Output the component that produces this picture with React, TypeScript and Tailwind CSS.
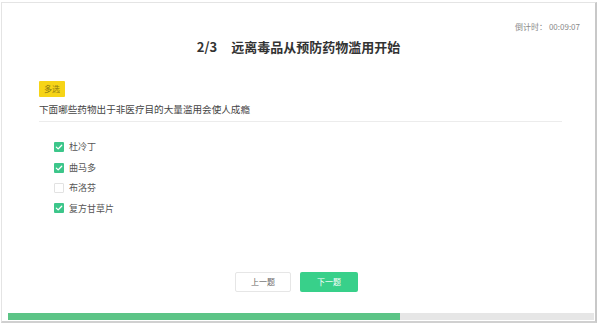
import React from "react";

const font = { fontFamily: '"Noto Sans CJK SC", "Noto Sans", sans-serif' };

function Check({ checked }: { checked: boolean }) {
  if (!checked) {
    return <div className="w-[10px] h-[10px] border border-[#e2e2e2] rounded-[1px] bg-white" />;
  }
  return (
    <div className="w-[10px] h-[10px] rounded-[1px] bg-[#3cc68a] flex items-center justify-center">
      <svg width="8" height="8" viewBox="0 0 8 8">
        <path d="M1.3 4.1 L3.2 5.9 L6.7 2.2" stroke="white" strokeWidth="1.3" fill="none" strokeLinecap="round" strokeLinejoin="round" />
      </svg>
    </div>
  );
}

export default function App() {
  const options = [
    { label: "杜冷丁", checked: true },
    { label: "曲马多", checked: true },
    { label: "布洛芬", checked: false },
    { label: "复方甘草片", checked: true },
  ];
  return (
    <div className="w-[600px] h-[328px] bg-white pt-[2px] pl-[1px]" style={font}>
      <div className="w-[596px] h-[321px] border border-[#e4e4e4] border-r-2 border-r-[#c8c8c8] border-b-2 border-b-[#d0d0d0] flex flex-col">
        <div className="pt-[18px] pr-[15px] flex justify-end text-[8px] leading-[11px] text-[#8a8a8a]">
          倒计时：&nbsp;00:09:07
        </div>
        <div className="mt-[6px] flex justify-center items-center h-[18px] text-[13px] font-bold text-[#333]">
          <span>2/3</span>
          <span className="ml-[14px]">远离毒品从预防药物滥用开始</span>
        </div>
        <div className="mt-[25px] ml-[37px] flex">
          <div className="h-[16px] px-[5px] bg-[#f6d417] text-[8px] leading-[16px] text-[#8d7a10] rounded-[1px]">多选</div>
        </div>
        <div className="mt-[4px] ml-[37px] w-[523px] h-[21px] pt-[1px] border-b border-[#ececec] text-[9.6px] leading-[14px] text-[#444]">
          下面哪些药物出于非医疗目的大量滥用会使人成瘾
        </div>
        <div className="mt-[15px] ml-[52px] flex flex-col">
          {options.map((o) => (
            <div key={o.label} className="h-[20.4px] flex items-center">
              <Check checked={o.checked} />
              <span className="ml-[5px] text-[9px] text-[#555]">{o.label}</span>
            </div>
          ))}
        </div>
        <div className="mt-[53px] flex justify-center gap-[9px] pr-[4px]">
          <div className="w-[56px] h-[20px] border border-[#e6e6e6] rounded-[2px] bg-white flex items-center justify-center text-[8px] text-[#666]">上一题</div>
          <div className="w-[58px] h-[20px] rounded-[2px] bg-[#38d08a] flex items-center justify-center text-[8px] text-white">下一题</div>
        </div>
        <div className="mt-[21px] ml-[6px] w-[586px] h-[7px] bg-[#e6e6e6]">
          <div className="h-full bg-[#5cc486]" style={{ width: "392px" }} />
        </div>
      </div>
    </div>
  );
}
